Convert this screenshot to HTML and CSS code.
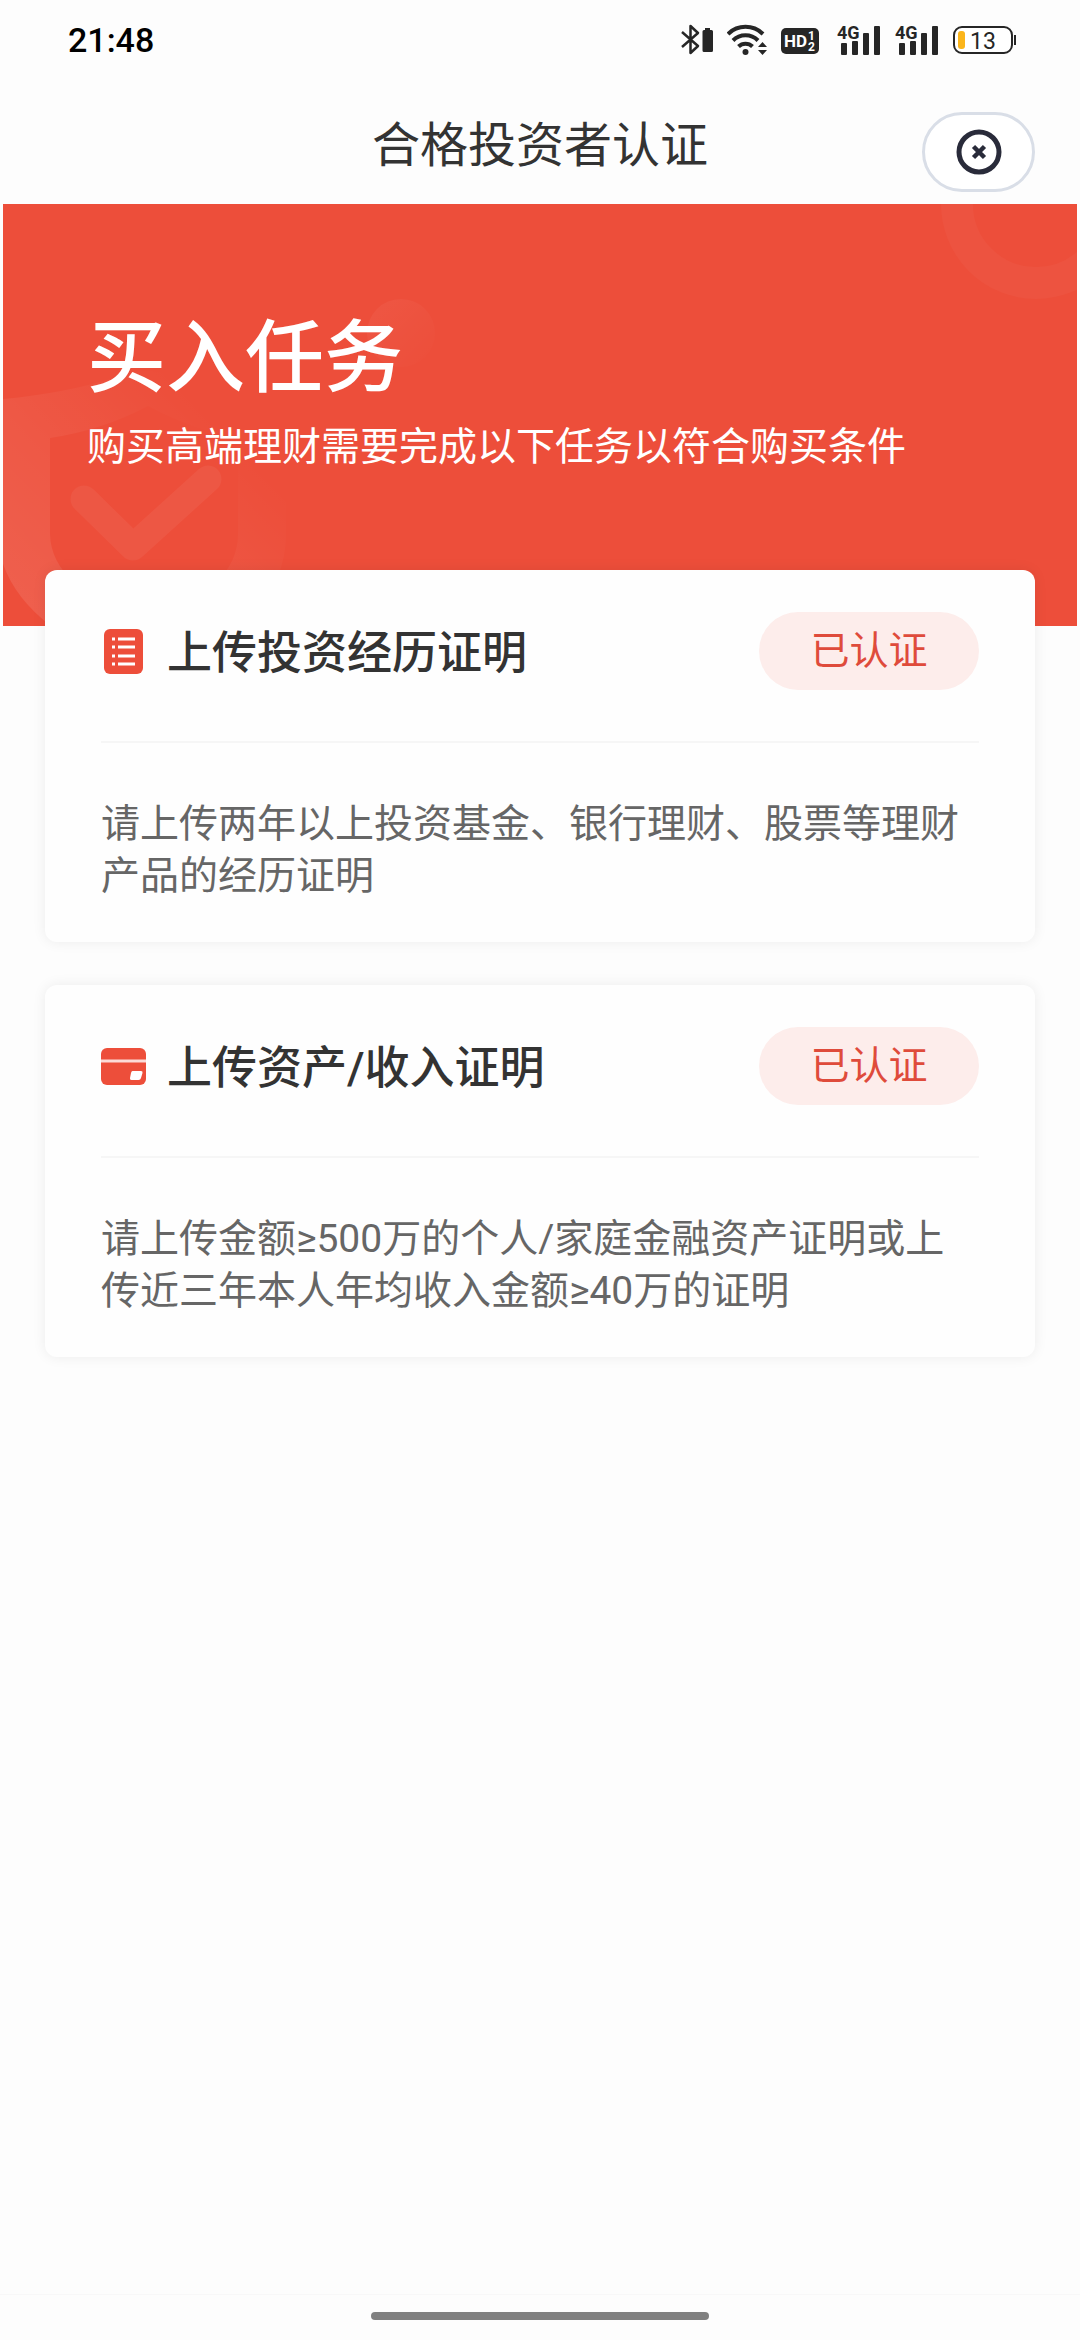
FILE: index.html
```html
<!DOCTYPE html>
<html lang="zh-CN">
<head>
<meta charset="utf-8">
<meta name="viewport" content="width=device-width, initial-scale=1">
<title>合格投资者认证</title>
<link rel="stylesheet" href="styles.css">
</head>
<body>
<div class="page">
  <div class="status-bar">
    <span class="clock">21:48</span>
    <div class="status-icons">
      <svg width="32" height="40" viewBox="0 -4 32 40" aria-hidden="true">
        <path d="M1 8 17 22 9.500 29V2L17 9 1 23" fill="none" stroke="#262626" stroke-width="2.500" stroke-linejoin="round"/>
        <path d="M24 4h5v2h1.500a1.500 1.500 0 0 1 1.500 1.500v19a1.500 1.500 0 0 1-1.500 1.500h-7.500a1.500 1.500 0 0 1-1.500-1.500v-19a1.500 1.500 0 0 1 1.500-1.500h1z" fill="#262626"/>
      </svg>
      <svg width="40" height="40" viewBox="0 -4 40 40" aria-hidden="true">
        <g fill="none" stroke="#262626" stroke-width="4">
          <path d="M1 10a25 25 0 0 1 35 0"/>
          <path d="M6 16.500a17.500 17.500 0 0 1 25 0"/>
          <path d="M11.500 22.500a10 10 0 0 1 14 0"/>
        </g>
        <circle cx="18.500" cy="28" r="3" fill="#262626"/>
        <path d="M31 23 35.500 18 40 23zM31 26h9l-4.500 5z" fill="#262626"/>
      </svg>
      <svg width="42" height="40" viewBox="0 -4 42 40" aria-hidden="true">
        <rect y="4" width="38" height="26" rx="5" fill="#262626"/>
        <text x="3" y="23" class="hd">HD</text>
        <text x="27" y="16" class="hd-index">1</text>
        <text x="27" y="27" class="hd-index">2</text>
      </svg>
      <svg width="44" height="40" viewBox="0 -4 44 40" aria-hidden="true">
        <text x="0" y="15" class="network">4G</text>
        <g fill="#262626"><rect x="4" y="19" width="6" height="12" rx="1"/><rect x="15" y="17" width="6" height="14" rx="1"/><rect x="26" y="9" width="6" height="22" rx="1"/><rect x="37" y="2" width="6" height="29" rx="1"/></g>
      </svg>
      <svg width="44" height="40" viewBox="0 -4 44 40" aria-hidden="true">
        <text x="0" y="15" class="network">4G</text>
        <g fill="#262626"><rect x="4" y="19" width="6" height="12" rx="1"/><rect x="15" y="17" width="6" height="14" rx="1"/><rect x="26" y="9" width="6" height="22" rx="1"/><rect x="37" y="2" width="6" height="29" rx="1"/></g>
      </svg>
      <svg width="64" height="40" viewBox="0 -4 64 40" aria-hidden="true">
        <rect x="1" y="3" width="58" height="26" rx="8" fill="#fff" stroke="#262626" stroke-width="2"/>
        <rect x="5" y="7" width="7" height="18" rx="3" fill="#fbb51b"/>
        <rect x="61" y="11" width="2" height="10" fill="#262626"/>
        <text x="17" y="25" class="battery-level">13</text>
      </svg>
    </div>
  </div>

  <header class="app-header">
    <h1 class="app-title">合格投资者认证</h1>
    <button class="close" type="button" aria-label="关闭">
      <svg width="46" height="46" viewBox="0 0 46 46" aria-hidden="true">
        <circle cx="23" cy="23" r="20" fill="none" stroke="#292b3a" stroke-width="5"/>
        <path d="m17.500 17.500 11 11m0-11-11 11" stroke="#292b3a" stroke-width="4.500"/>
      </svg>
    </button>
  </header>

  <main>
    <section class="banner">
      <svg class="banner-shield" width="460" height="422" viewBox="0 0 460 422" aria-hidden="true">
        <defs>
          <linearGradient id="shield" x1="0" y1="1" x2="1" y2="0">
            <stop offset="0" stop-color="#fff" stop-opacity=".12"/>
            <stop offset=".45" stop-color="#fff" stop-opacity=".06"/>
            <stop offset=".8" stop-color="#fff" stop-opacity="0"/>
          </linearGradient>
          <linearGradient id="glow" x1="0" y1="0" x2="1" y2="1">
            <stop offset="0" stop-color="#fff" stop-opacity=".05"/>
            <stop offset="1" stop-color="#fff" stop-opacity="0"/>
          </linearGradient>
        </defs>
        <path fill="url(#shield)" fill-rule="evenodd" d="M-10 196Q60 190 110 174Q145 160 180 174Q220 192 283 205V330Q283 422 145 470Q0 422-6 330ZM47 234V330Q48 385 145 418Q235 385 235 330V234Q190 226 145 202Q100 226 47 234Z"/>
        <path d="m81 295 49 48 75-68" fill="none" stroke="#fff" stroke-opacity=".05" stroke-width="27" stroke-linecap="round" stroke-linejoin="round"/>
        <circle cx="398" cy="129" r="34" fill="url(#glow)"/>
      </svg>
      <svg class="banner-ring" width="140" height="104" viewBox="0 0 140 104" aria-hidden="true">
        <circle cx="99" cy="0" r="79" fill="none" stroke="#fff" stroke-opacity=".03" stroke-width="32"/>
      </svg>
      <h2 class="banner-title">买入任务</h2>
      <p class="banner-text">购买高端理财需要完成以下任务以符合购买条件</p>
    </section>

    <div class="tasks">
      <article class="card">
        <div class="card-head">
          <svg width="45" height="45" viewBox="0 0 45 45" aria-hidden="true">
            <rect x="3" width="39" height="45" rx="6" fill="#ed4e3a"/>
            <path d="M11 10h3m3 0h17M11 18h3m3 0h17M11 27h3m3 0h17M11 35h3m3 0h17" stroke="#fff" stroke-width="3"/>
          </svg>
          <h3 class="card-title">上传投资经历证明</h3>
          <span class="badge">已认证</span>
        </div>
        <p class="card-text">请上传两年以上投资基金、银行理财、股票等理财产品的经历证明</p>
      </article>

      <article class="card">
        <div class="card-head">
          <svg width="45" height="45" viewBox="0 0 45 45" aria-hidden="true">
            <rect y="4" width="45" height="37" rx="6" fill="#ed4e3a"/>
            <path d="M0 17h45" stroke="#fff" stroke-opacity=".8" stroke-width="3"/>
            <path d="M31.500 27h8.500q2 0 1.500 2l-1.500 5q-.5 2-2.500 2h-7q-2 0-1.500-2l1-5q.5-2 1.500-2z" fill="#fff"/>
          </svg>
          <h3 class="card-title">上传资产/收入证明</h3>
          <span class="badge">已认证</span>
        </div>
        <p class="card-text">请上传金额≥500万的个人/家庭金融资产证明或上传近三年本人年均收入金额≥40万的证明</p>
      </article>
    </div>
  </main>

  <div class="home-bar"><span class="home-indicator"></span></div>
</div>
</body>
</html>
```
FILE: styles.css
```css
* {
  box-sizing: border-box;
}

body {
  margin: 0;
  background: #fdfdfd;
  color: #333;
  font-family: Roboto, "Noto Sans CJK SC", sans-serif;
}

h1, h2, h3, p {
  margin: 0;
}

svg {
  display: block;
  flex: none;
}

.page {
  display: flex;
  flex-direction: column;
  min-height: 100vh;
}

/* System status bar */
.status-bar {
  display: flex;
  align-items: center;
  justify-content: space-between;
  height: 80px;
  padding: 0 63px 0 68px;
}

.clock {
  color: #000;
  font-size: 34px;
  font-weight: 500;
  line-height: 40px;
}

.status-icons {
  display: flex;
  gap: 14px;
}

.status-icons text {
  fill: #262626;
  font-family: Roboto, sans-serif;
}

.status-icons .hd {
  fill: #fff;
  font-size: 17px;
  font-weight: 700;
}

.status-icons .hd-index {
  fill: #fff;
  font-size: 12px;
  font-weight: 700;
}

.network {
  font-size: 18px;
  font-weight: 700;
}

.battery-level {
  font-size: 23px;
}

/* App header */
.app-header {
  display: grid;
  grid-template-columns: 1fr auto 1fr;
  align-items: center;
  padding: 20px 45px 0;
  height: 124px;
}

.app-title {
  grid-column: 2;
  padding-bottom: 12px;
  font-size: 48px;
  font-weight: 400;
  line-height: 64px;
}

.close {
  display: flex;
  align-items: center;
  justify-content: center;
  justify-self: end;
  width: 113px;
  height: 80px;
  padding: 0;
  border: 3px solid #d9dee7;
  border-radius: 40px;
  background: #fff;
}

/* Banner */
.banner {
  position: relative;
  overflow: hidden;
  margin: 0 3px;
  padding: 99px 84px 152px;
  background: #ed4e3a;
  color: #fff;
}

.banner-shield,
.banner-ring {
  position: absolute;
  top: 0;
}

.banner-shield {
  left: 0;
}

.banner-ring {
  right: 0;
}

.banner-title {
  position: relative;
  margin-bottom: 5px;
  font-size: 79px;
  font-weight: 500;
  line-height: 112px;
}

.banner-text {
  position: relative;
  font-size: 39px;
  line-height: 54px;
}

/* Task cards */
.tasks {
  position: relative;
  display: grid;
  gap: 43px;
  margin-top: -56px;
  padding: 0 45px;
}

.card {
  padding: 42px 56px 40px;
  border-radius: 12px;
  background: #fefefe;
  box-shadow: 0 0 14px rgba(0, 0, 0, 0.07);
}

.card-head {
  display: flex;
  align-items: center;
  gap: 21px;
  padding-bottom: 51px;
  border-bottom: 2px solid #f6f6f6;
}

.card-title {
  flex: 1;
  padding-top: 5px;
  font-size: 45px;
  font-weight: 500;
  line-height: 64px;
}

.badge {
  width: 220px;
  border-radius: 39px;
  background: #fdedeb;
  color: #df4b3b;
  font-size: 39px;
  line-height: 78px;
  text-align: center;
}

.card-text {
  padding-top: 55px;
  color: #666;
  font-size: 39px;
  line-height: 52px;
}

/* Gesture bar */
.home-bar {
  display: flex;
  justify-content: center;
  margin-top: auto;
  padding: 17px 0 20px;
  border-top: 1px solid #f8f8f8;
}

.home-indicator {
  width: 338px;
  height: 8px;
  border-radius: 4px;
  background: #808080;
}
```
